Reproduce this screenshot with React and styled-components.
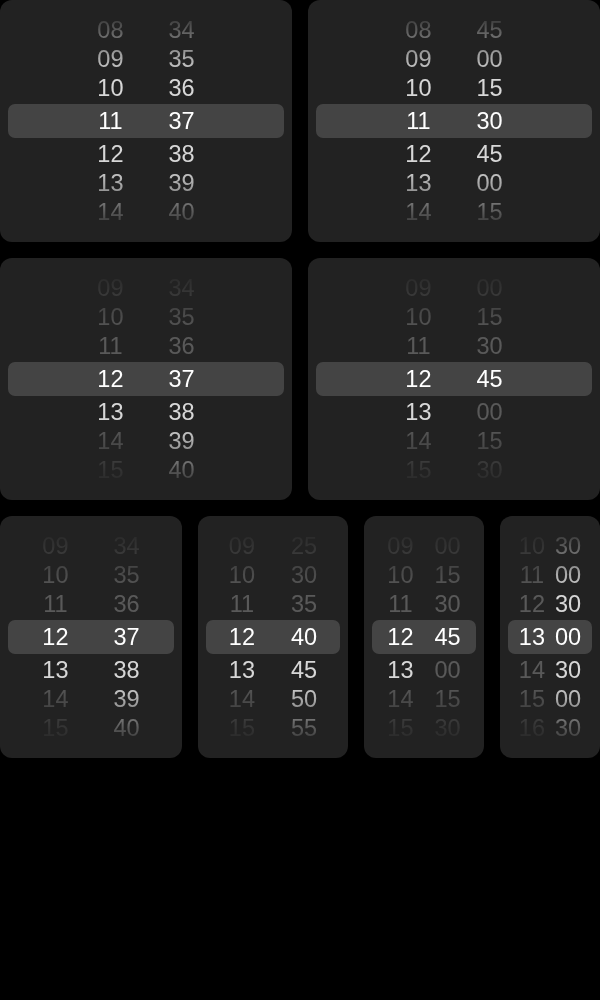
import React from "react";
import styled, { createGlobalStyle } from "styled-components";

const Global = createGlobalStyle`
  html, body { margin: 0; padding: 0; background: #000; }
  body { font-family: "Liberation Sans", Arial, sans-serif; }
`;

const Page = styled.div`
  display: flex;
  flex-direction: column;
  gap: 16px;
  width: 600px;
`;

const Row = styled.div`
  display: flex;
  gap: 16px;
`;

const Panel = styled.div`
  position: relative;
  width: ${(p) => p.$w}px;
  height: 242px;
  flex: none;
  background: #222222;
  border-radius: 12px;
  overflow: hidden;
`;

const Highlight = styled.div`
  position: absolute;
  left: 8px;
  right: 8px;
  top: 104px;
  height: 34px;
  background: #444444;
  border-radius: 7px;
`;

const Wheel = styled.div`
  position: relative;
  height: 100%;
  display: flex;
  justify-content: center;
  align-items: center;
  gap: ${(p) => p.$gap}px;
  -webkit-mask-image: linear-gradient(to bottom, transparent 4%, #000 31%, #000 69%, transparent 96%);
  mask-image: linear-gradient(to bottom, transparent 4%, #000 31%, #000 69%, transparent 96%);
`;

const Column = styled.div`
  display: flex;
  flex-direction: column;
  align-items: center;
`;

const Item = styled.div`
  height: ${(p) => (p.$selected ? 37 : 29)}px;
  line-height: ${(p) => (p.$selected ? 36 : 28)}px;
  font-size: 23.5px;
  font-variant-numeric: tabular-nums;
  color: ${(p) =>
    p.$selected ? "#ffffff" : p.$disabled ? "rgba(255,255,255,0.25)" : "rgba(255,255,255,0.82)"};
`;

const pad = (n) => String(n).padStart(2, "0");

const range = (a, b) => {
  const out = [];
  for (let i = a; i <= b; i++) out.push(pad(i));
  return out;
};

const pickers = [
  [
    { w: 292, gap: 45, h: range(8, 14), hd: [], m: range(34, 40), md: [] },
    { w: 292, gap: 45, h: range(8, 14), hd: [], m: ["45", "00", "15", "30", "45", "00", "15"], md: [] },
  ],
  [
    { w: 292, gap: 45, h: range(9, 15), hd: [0, 1, 2, 5, 6], m: range(34, 40), md: [0, 1, 2] },
    { w: 292, gap: 45, h: range(9, 15), hd: [0, 1, 2, 5, 6], m: ["00", "15", "30", "45", "00", "15", "30"], md: [0, 1, 2, 4, 5, 6] },
  ],
  [
    { w: 182, gap: 45, h: range(9, 15), hd: [0, 1, 2, 5, 6], m: range(34, 40), md: [0, 1, 2] },
    { w: 150, gap: 36, h: range(9, 15), hd: [0, 1, 2, 5, 6], m: ["25", "30", "35", "40", "45", "50", "55"], md: [0, 1, 2] },
    { w: 120, gap: 21, h: range(9, 15), hd: [0, 1, 2, 5, 6], m: ["00", "15", "30", "45", "00", "15", "30"], md: [0, 1, 2, 4, 5, 6] },
    { w: 100, gap: 10, h: range(10, 16), hd: [0, 1, 2, 4, 5, 6], m: ["30", "00", "30", "00", "30", "00", "30"], md: [] },
  ],
];

function WheelColumn({ values, disabled }) {
  return (
    <Column>
      {values.map((v, i) => (
        <Item key={i} $selected={i === 3} $disabled={disabled.includes(i)}>
          {v}
        </Item>
      ))}
    </Column>
  );
}

function TimePicker({ cfg }) {
  return (
    <Panel $w={cfg.w}>
      <Highlight />
      <Wheel $gap={cfg.gap}>
        <WheelColumn values={cfg.h} disabled={cfg.hd} />
        <WheelColumn values={cfg.m} disabled={cfg.md} />
      </Wheel>
    </Panel>
  );
}

export default function App() {
  return (
    <>
      <Global />
      <Page>
        {pickers.map((row, r) => (
          <Row key={r}>
            {row.map((cfg, i) => (
              <TimePicker key={i} cfg={cfg} />
            ))}
          </Row>
        ))}
      </Page>
    </>
  );
}
